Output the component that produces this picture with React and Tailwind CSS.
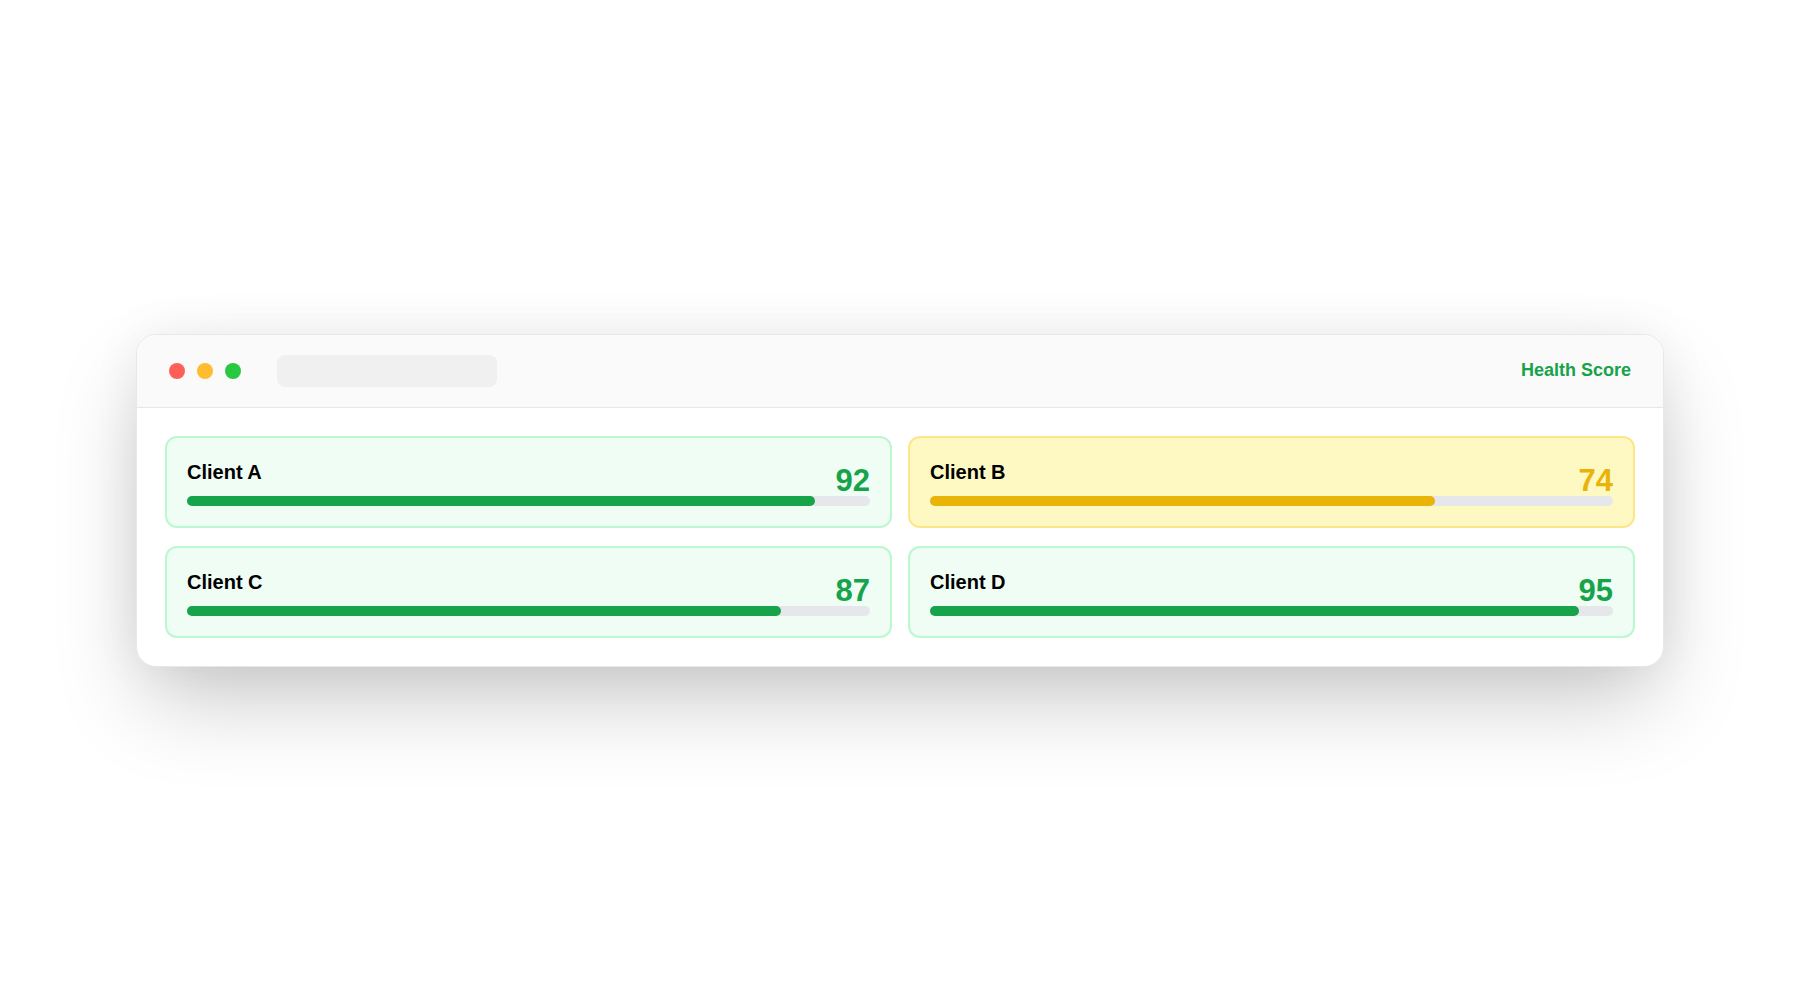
import React from 'react';

const clients = [
    { name: 'Client A', score: 92, tone: 'good' },
    { name: 'Client B', score: 74, tone: 'warn' },
    { name: 'Client C', score: 87, tone: 'good' },
    { name: 'Client D', score: 95, tone: 'good' },
];

const tones = {
    good: {
        card: 'bg-[#f0fdf4] border-[#bbf7d0]',
        text: 'text-[#16a34a]',
        bar: 'bg-[#16a34a]',
    },
    warn: {
        card: 'bg-[#fef9c3] border-[#fde68a]',
        text: 'text-[#eab308]',
        bar: 'bg-[#eab308]',
    },
};

function ClientCard({ name, score, tone }) {
    const t = tones[tone];
    return (
        <div className={`rounded-xl border-2 px-5 pt-5 pb-5 ${t.card}`}>
            <div className="flex items-start justify-between">
                <span className="text-[20px] leading-7 font-bold text-black">{name}</span>
                <span className={`mt-[7px] text-[31px] leading-none font-bold ${t.text}`}>{score}</span>
            </div>
            <div className="h-[10px] w-full rounded-full bg-[#e5e7eb]">
                <div className={`h-full rounded-full ${t.bar}`} style={{ width: `${score}%` }} />
            </div>
        </div>
    );
}

export default function App() {
    return (
        <div
            className="flex h-screen w-full items-center justify-center bg-white"
            style={{ fontFamily: '"Liberation Sans", Arial, sans-serif' }}
        >
            <div className="w-[1528px] overflow-hidden rounded-[20px] border border-[#e8e8e8] bg-white shadow-[0_40px_90px_-10px_rgba(0,0,0,0.22),0_0_50px_rgba(0,0,0,0.06)]">
                {/* title bar */}
                <div className="flex h-[73px] items-center border-b border-[#e5e7eb] bg-[#fafafa] px-8">
                    <div className="flex items-center gap-3">
                        <span className="h-4 w-4 rounded-full bg-[#ff5f57]" />
                        <span className="h-4 w-4 rounded-full bg-[#febc2e]" />
                        <span className="h-4 w-4 rounded-full bg-[#28c840]" />
                    </div>
                    <div className="ml-9 h-8 w-[220px] rounded-lg bg-[#f0f0f0]" />
                    <div className="ml-auto text-[18px] font-bold text-[#16a34a]">Health Score</div>
                </div>

                {/* cards */}
                <div className="grid grid-cols-2 gap-x-4 gap-y-[18px] p-7">
                    {clients.map((c) => (
                        <ClientCard key={c.name} {...c} />
                    ))}
                </div>
            </div>
        </div>
    );
}
